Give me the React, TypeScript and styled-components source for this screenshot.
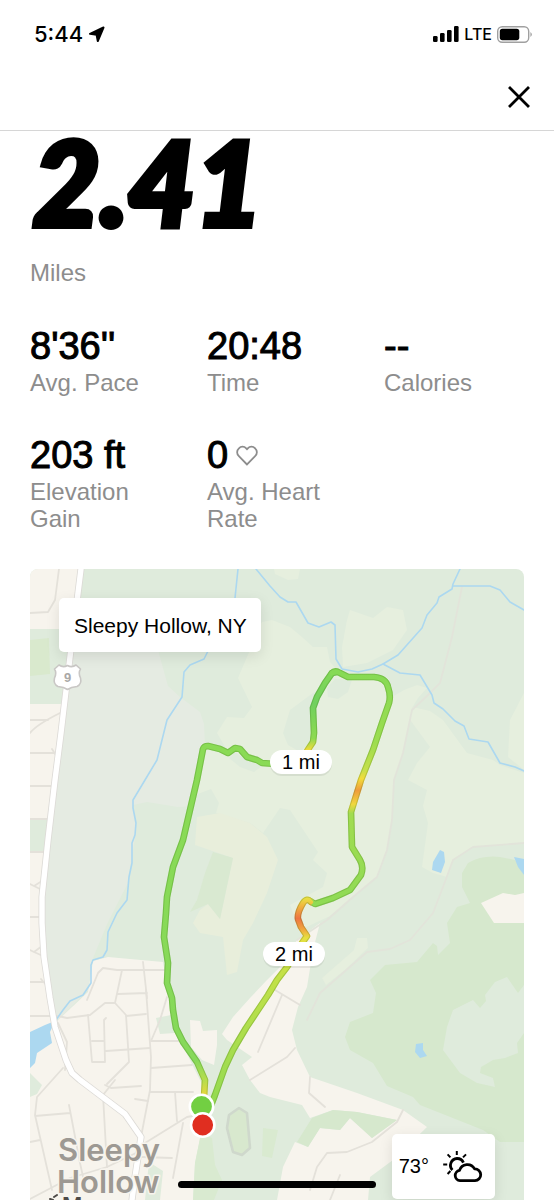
import React from "react";
import styled, { createGlobalStyle } from "styled-components";

const GlobalStyle = createGlobalStyle`
  *, *::before, *::after { box-sizing: border-box; }
  body {
    margin: 0;
    background: #fff;
    color: #000;
    font-family: "Liberation Sans", Arial, sans-serif;
  }
`;

const Page = styled.div`
  min-height: 100vh;
  overflow: hidden;
`;

const StatusBar = styled.div`
  display: flex;
  align-items: center;
  justify-content: space-between;
  height: 64px;
  padding: 4px 21px 0 34px;
  font-family: Inter, "Liberation Sans", sans-serif;
  font-weight: 500;
`;

const StatusGroup = styled.div`
  display: flex;
  align-items: center;
  gap: 5px;
`;

const Clock = styled.span`
  font-size: 22px;
  line-height: 24px;
`;

const Carrier = styled.span`
  font-size: 16px;
  line-height: 24px;
`;

const Header = styled.header`
  display: flex;
  align-items: center;
  justify-content: flex-end;
  height: 67px;
  padding: 0 19px;
  border-bottom: 1px solid #d6d6d6;
`;

const CloseButton = styled.button`
  display: grid;
  place-items: center;
  width: 32px;
  height: 32px;
  padding: 0;
  border: 0;
  background: none;
  color: #000;
  cursor: pointer;
`;

const Summary = styled.main`
  padding: 0 30px;
`;

const Distance = styled.h1`
  margin: 0;
  padding-left: 3px;
  font-family: Lato, sans-serif;
  font-size: 116px;
  line-height: 102px;
  font-weight: 900;
  font-style: italic;
  -webkit-text-stroke: 6px #000;
`;

const DistanceUnit = styled.p`
  margin: 26px 0 37px;
  font-size: 24px;
  line-height: 28px;
  color: #8d8d8d;
`;

const Stats = styled.dl`
  display: grid;
  grid-template-columns: repeat(3, 1fr);
  gap: 37px;
  margin: 0 0 37px;
`;

const Stat = styled.div`
  display: flex;
  flex-direction: column-reverse;
  justify-content: flex-end;
`;

const StatValue = styled.dd`
  display: flex;
  align-items: center;
  gap: 8px;
  margin: 0;
  font-size: 38px;
  line-height: 45px;
  -webkit-text-stroke: 1px #000;
`;

const StatLabel = styled.dt`
  font-size: 24px;
  line-height: 27px;
  color: #8d8d8d;
`;

const MapCard = styled.section`
  display: grid;
  overflow: hidden;
  border-radius: 8px 8px 0 0;

  & > * {
    grid-area: 1 / 1;
  }
`;

const MapCanvas = styled.svg`
  display: block;
  width: 100%;
  height: auto;
`;

const Place = styled.div`
  place-self: start;
  margin: 29px;
  padding: 14px 14px 12px 15px;
  border-radius: 5px;
  background: #fff;
  box-shadow: 0 4px 14px rgba(0, 0, 0, 0.1);
  font-size: 21px;
  line-height: 28px;
`;

const Weather = styled.div`
  display: flex;
  align-items: center;
  gap: 13px;
  place-self: end;
  height: 65px;
  margin: 0 29px 1px;
  padding: 0 11px 0 7px;
  border-radius: 5px;
  background: #fff;
  box-shadow: 0 4px 14px rgba(0, 0, 0, 0.1);
  font-size: 20px;
`;

const HomeIndicator = styled.div`
  position: fixed;
  bottom: 12px;
  left: 50%;
  width: 198px;
  height: 7px;
  border-radius: 4px;
  background: #000;
  transform: translateX(-50%);
`;

const FOREST = "#dfebdc";
const MEADOW = "#e6efde";
const FIELD = "#e8eedb";
const GROVE = "#d6e8cd";
const LAND = "#f7f4ed";
const WATER = "#acd8f0";

const meadows = [
  "M262 622 L272 620 L290 627 L302 637 L313 647 L327 647 L330 662 L337 670 L360 676 L388 678 L392 697 L404 690 L417 685 L427 688 L418 698 L412 708 L403 753 L394 780 L392 820 L387 850 L377 877 L353 897 L330 916 L300 930 L290 905 L323 887 L327 873 L313 860 L318 852 L290 810 L280 808 L263 833 L250 823 L216 813 L219 803 L211 789 L195 795 L205 745 L227 750 L217 733 L227 717 L244 718 L252 707 L238 678 L250 650 L258 628 Z",
  "M413 707 L430 711 L443 720 L467 753 L493 760 L500 765 L524 773 L524 843 L473 847 L453 860 L447 877 L433 873 L422 867 L428 823 L423 806 L427 790 L408 780 L417 763 L430 747 L408 717 Z",
  "M524 693 L510 720 L508 757 L524 770 Z",
  "M350 610 L373 618 L387 607 L403 610 L407 630 L393 650 L367 663 L343 667 L342 647 L347 620 Z",
  "M274 569 L275 574 L288 580 L298 579 L300 569 Z",
  "M357 938 L367 938 L368 948 L345 970 L326 985 L322 978 L354 950 Z",
];

const woods = [
  "M313 693 L290 710 L283 733 L288 745 L300 752 L312 740 L312 708 L322 690 Z",
  "M327 688 L335 679 L352 680 L348 692 L338 699 L328 697 Z",
  "M235 752 L246 760 L262 766 L254 772 L240 767 L229 758 Z",
];

const streets = [
  "M59 569 L55 600 L48 612 L30 613",
  "M30 720 L48 720 M30 733 Q36 725 60 713 M30 753 L56 753 M52 749 L57 757",
  "M30 786 L52 786 M30 819 L47 819 M30 852 L45 852 M30 884 L34 886 L42 881 M34 886 L42 890",
  "M30 917 L40 917 M30 950 L34 952 L42 946 M34 952 L43 956 M30 982 L46 982 M41 979 L47 986",
  "M30 1016 L58 1016 L67 1018 L90 1015 L105 1003 L115 1003 L126 1015 L129 1062 L107 1084",
  "M58 1023 L67 1042 L65 1070",
  "M88 1015 L92 1062 L105 1062 L104 1020 L106 1018 M92 1041 L104 1041 M106 1051 L150 1048 M126 1016 L146 1014",
  "M146 990 L151 1057 L150 1090 L141 1137",
  "M87 1000 L98 973 L103 968 L117 970 L165 970 M122 970 L115 1003 M143 962 L147 998 M118 994 L147 993",
  "M167 997 L160 1020 L151 1041 L181 1041 M151 1068 L192 1065 M150 1092 L193 1092",
  "M175 1092 L177 1121 M145 1143 L187 1117 L198 1115 M183 1123 L173 1178 M142 1157 L172 1158",
  "M63 1068 L37 1097 L35 1115 L52 1190 M35 1116 L70 1113 M69 1105 L80 1163 L86 1190 M30 1142 L40 1140",
  "M103 1095 L107 1167 M103 1095 L115 1080 M105 1085 L111 1088 L141 1086 M135 1099 L148 1101",
  "M30 1199 L70 1178 L107 1167 L138 1152",
  "M270 987 L300 1005 M282 995 L258 1052 M295 1048 L287 1057 L250 1080",
  "M310 1077 L309 1093 L325 1107 M403 1110 L397 1122 L372 1142 L347 1152 L327 1153 L317 1167 L310 1190 M340 1175 L330 1200",
];

const trails = [
  "M462 587 L452 637 L440 683 L427 696 L412 710 L403 753 L394 780 L392 820 L387 850 L377 877 L353 897 L327 920 L297 940",
  "M524 843 L473 847 L453 860 L443 887 L433 913 L410 940 L390 949 L367 952 L320 993 L307 1020",
];

const streams = [
  "M238 569 L235 598 L207 653 L204 659 L190 665 L184 672 L182 697 L167 720 L157 760 L145 780 L133 800 L133 808 L136 823 L135 835 L132 843 L132 863 L129 877 L127 900 L117 913 L108 932 L107 950 L103 957 L93 960 L91 965 L91 983 L83 995 L70 1001 L63 1010 L56 1020",
  "M256 569 L270 586 L280 597 L288 602 L296 602 L308 623 L319 627 L331 622 L335 625 L336 659 L342 669 L358 672 L372 669 L383 664 L398 655 L422 628 L427 615 L437 603 L439 597 L452 589 L453 584 L460 569",
  "M453 586 L490 586 L500 590 L510 602 L524 610",
  "M383 664 L400 673 L420 675 L432 695 L434 703 L443 709 L455 721 L464 726 L469 739 L488 742 L500 763 L515 767 L524 771",
];

const ponds = [
  "M440 850 L444 852 L445 862 L441 873 L432 870 L433 862 Z",
  "M514 857 L524 859 L524 875 L518 867 Z",
  "M416 1044 L423 1043 L423 1050 L427 1056 L420 1058 L415 1052 Z",
  "M30 1032 L45 1025 L55 1021 L50 1032 L52 1043 L37 1053 L35 1063 L30 1068 Z",
];

const HIGHWAY =
  "M81 569 L70 657 L61 733 L55 780 L48 840 L42 897 L42 923 L44 957 L50 998 L55 1027 L66 1060 L72 1073 L80 1080 L125 1114 L141 1137 L135 1177 L132 1200";

type Stop = [number, string];

interface RoutePart {
  id: string;
  from: number;
  to: number;
  stops: Stop[];
  d: string;
}

const route: RoutePart[] = [
  {
    id: "first",
    from: 747,
    to: 1095,
    stops: [[0, "#8adb55"], [0.9, "#86d95a"], [0.96, "#b9dd4c"], [1, "#e8d83e"]],
    d: "M204 1097 L205 1080 L197 1062 L183 1042 L176 1028 L173 1010 L172 998 L167 983 L168 963 L164 937 L166 913 L167 897 L173 867 L183 840 L197 780 L203 749 Q204 746 208 746 L220 749 L228 753 L235 748 L240 749 L247 757 L257 760 L262 763 L276 764",
  },
  {
    id: "second",
    from: 672,
    to: 750,
    stops: [[0, "#83d957"], [0.4, "#70d05e"], [0.85, "#8dda50"], [1, "#f0dc3c"]],
    d: "M304 756 L309 748 L313 742 L314 733 L313 708 L317 697 L325 683 L332 673 L337 672",
  },
  {
    id: "third",
    from: 672,
    to: 904,
    stops: [
      [0, "#86da55"],
      [0.3, "#9cdd50"],
      [0.42, "#c4e04a"],
      [0.46, "#f3dc3b"],
      [0.51, "#ef9c3c"],
      [0.57, "#f0d83d"],
      [0.61, "#a2dc50"],
      [1, "#8fdb55"],
    ],
    d: "M332 673 Q335 670 340 673 L348 677 L374 677 Q386 678 388 687 Q391 696 389 703 L382 723 L373 750 L361 780 L351 812 L352 847 L360 860 Q364 867 361 875 L350 890 L333 898 L315 904 L310 901",
  },
  {
    id: "fourth",
    from: 899,
    to: 1115,
    stops: [
      [0, "#e9dd42"],
      [0.03, "#f0b83f"],
      [0.09, "#ee7442"],
      [0.14, "#f0a53e"],
      [0.18, "#e6e040"],
      [0.35, "#c3e148"],
      [0.8, "#9fdc50"],
      [1, "#8fda52"],
    ],
    d: "M311 902 Q307 897 303 903 Q297 913 298 919 L301 927 L307 936 L302 943 L287 967 L277 980 L268 995 L258 1010 L246 1028 L233 1050 L225 1067 L215 1095 L208 1113",
  },
];

function MileMarker({ x, y, children }: { x: number; y: number; children: string }) {
  return (
    <g>
      <rect x={x - 31} y={y - 10} width="62" height="24" rx="12" fill="#000" opacity="0.07" />
      <rect x={x - 31} y={y - 12} width="62" height="24" rx="12" fill="#fff" />
      <text x={x} y={y + 7} fontSize="20" textAnchor="middle">
        {children}
      </text>
    </g>
  );
}

function RouteMap() {
  return (
    <MapCanvas
      viewBox="30 569 494 631"
      role="img"
      aria-label="Route map"
      fontFamily='"Liberation Sans", Arial, sans-serif'
      strokeLinejoin="round"
      strokeLinecap="round"
    >
      <defs>
        {route.map((part) => (
          <linearGradient
            key={part.id}
            id={`pace-${part.id}`}
            gradientUnits="userSpaceOnUse"
            x1="0"
            x2="0"
            y1={part.from}
            y2={part.to}
          >
            {part.stops.map(([offset, color]) => (
              <stop key={offset} offset={offset} stopColor={color} />
            ))}
          </linearGradient>
        ))}
      </defs>

      <rect x="30" y="569" width="494" height="631" fill={FOREST} />
      <path
        fill="#e5ebe2"
        d="M71 650 L158 650 L168 686 L180 697 L200 712 L204 724 L205 745 L195 806 L178 807 L147 802 L133 805 L136 832 L127 885 L108 922 L93 958 L88 990 L58 1020 L49 1000 L42 920 Z"
      />
      {meadows.map((d) => <path key={d} d={d} fill={MEADOW} />)}
      {woods.map((d) => <path key={d} d={d} fill={FOREST} />)}
      <path
        fill={FIELD}
        d="M197 817 L220 813 L250 823 L267 837 L278 860 L267 893 L253 923 L243 940 L237 972 L227 975 L223 937 L200 933 L193 923 L200 910 L208 904 L220 919 L233 858 L195 845 Z"
      />
      <path fill="#d9e9d1" d="M213 852 L233 858 L220 919 L208 904 L190 912 L197 900 L205 873 Z" />

      <path
        fill={GROVE}
        d="M468 863 Q482 855 500 857 L515 860 L524 875 L524 1142 L500 1142 L483 1130 L420 1105 L413 1097 L387 1086 L373 1063 L350 1050 L345 1037 L350 1022 L373 1013 L376 993 L370 980 L385 965 L417 962 L433 943 L437 946 L438 955 L450 943 L447 923 L457 907 L470 903 L462 887 L462 873 Z"
      />
      <path
        fill={FOREST}
        d="M524 985 L518 993 L507 977 L495 982 L485 995 L486 1001 L480 1008 L473 1000 L453 1010 L447 1027 L443 1050 L460 1073 L477 1083 L495 1087 L493 1078 L480 1073 L481 1067 L493 1060 L505 1058 L518 1053 L517 1043 L524 1033 Z"
      />
      <path fill={LAND} d="M481 903 L503 893 L515 895 L524 893 L524 923 L494 923 Z" />

      <path fill={LAND} d="M30 569 L81 569 L73 629 L30 629 Z" />
      <path fill="#d9e9cd" d="M30 640 L49 638 L50 674 L30 676 Z" />
      <path fill={LAND} d="M30 704 L64 704 L49 820 L30 820 Z M30 851 L48 851 L42 897 L42 923 L50 998 L56 1022 L88 992 L93 961 L108 957 L163 962 L167 983 L173 1025 L190 1060 L205 1090 L203 1125 L195 1163 L193 1200 L30 1200 Z" />
      <path fill={FOREST} d="M156 1018 L171 1015 L175 1033 L160 1034 Z M30 1073 L42 1085 L37 1094 L30 1097 Z M149 1162 L163 1171 L160 1200 L145 1200 Z" />
      <path fill={LAND} d="M190 1020 L200 1021 L203 1031 L217 1030 L217 1045 L214 1065 L202 1060 L191 1047 Z" />
      <path
        fill={LAND}
        d="M233 1017 L250 998 L267 980 L280 967 L297 940 L320 923 L313 950 L307 987 L298 1007 L292 1030 L297 1050 L310 1077 L357 1093 L403 1110 L427 1127 L393 1160 L370 1177 L368 1200 L277 1200 L283 1167 L295 1142 L308 1147 L320 1128 L340 1130 L350 1118 L372 1138 L397 1120 L357 1112 L333 1110 L310 1118 L302 1105 L270 1097 L260 1093 L250 1080 L242 1065 L252 1057 L227 1040 L222 1034 Z"
      />
      <path
        fill={GROVE}
        d="M297 1142 L312 1118 L333 1110 L357 1112 L397 1120 L372 1138 L350 1118 L340 1130 L320 1128 L308 1147 Z"
      />
      <path fill="#d9ead0" d="M201 1133 L212 1138 L215 1165 L222 1180 L214 1200 L193 1200 L195 1163 Z M263 1128 L278 1130 L272 1158 L262 1156 Z" />
      <path
        fill="#d8e8ce"
        stroke="#cfd8cc"
        strokeWidth="2.6"
        d="M229 1115 L239 1108 L247 1113 L250 1148 L242 1155 L233 1152 L227 1128 Z"
      />

      <g fill="none" stroke="#e2e4da" strokeWidth="1.8">
        {trails.map((d) => <path key={d} d={d} />)}
      </g>
      <g fill="none" stroke="#e4e1da" strokeWidth="1.8">
        {streets.map((d) => <path key={d} d={d} />)}
      </g>
      <g fill="none" stroke={WATER} strokeWidth="1.6">
        {streams.map((d) => <path key={d} d={d} />)}
      </g>
      {ponds.map((d) => <path key={d} d={d} fill={WATER} />)}
      <path d={HIGHWAY} fill="none" stroke="#dcdad6" strokeWidth="7" />
      <path d={HIGHWAY} fill="none" stroke="#fff" strokeWidth="5.4" />

      <path
        fill="#fff"
        stroke="#c9c7c5"
        strokeWidth="1.6"
        d="M59 665 Q63 668 67.500 665.500 Q72 668 76 665 L80.500 669 Q78 673 80.500 678 Q82 684 77 686.500 Q71 687 67.500 689.500 Q64 687 58 686.500 Q53 684 54.500 678 Q57 673 54.500 669 Z"
      />
      <text x="67.500" y="682" fontSize="13" fontWeight="700" textAnchor="middle" fill="#aaa8a6">
        9
      </text>

      <g
        fontFamily="Inter, sans-serif"
        fontSize="31"
        fontWeight="600"
        fill="#9d9993"
        stroke="#f7f4ed"
        strokeWidth="3"
        paintOrder="stroke"
      >
        <text x="58" y="1161">Sleepy</text>
        <text x="57" y="1193">Hollow</text>
      </g>
      <text x="62" y="1213" fontFamily="Inter, sans-serif" fontSize="22" fontWeight="600" fill="#4d4a47">
        M
      </text>
      <path d="M50 1199 L53 1200 M54 1197 L57 1195" stroke="#4d4a47" strokeWidth="2" />

      <g fill="none">
        {route.map((part) => (
          <g key={part.id} stroke={`url(#pace-${part.id})`}>
            <path d={part.d} strokeWidth="6.6" />
            <path d={part.d} strokeWidth="6.6" stroke="#2f5a10" strokeOpacity="0.2" />
          </g>
        ))}
        {route.map((part) => (
          <path key={part.id} d={part.d} strokeWidth="4.4" stroke={`url(#pace-${part.id})`} />
        ))}
      </g>

      <circle cx="201.500" cy="1106.500" r="11.700" fill="#72cf42" stroke="#fff" strokeWidth="2.600" />
      <circle cx="202.700" cy="1125" r="11.700" fill="#e02e20" stroke="#fff" strokeWidth="2.600" />

      <MileMarker x={301} y={762}>1 mi</MileMarker>
      <MileMarker x={294} y={954}>2 mi</MileMarker>
    </MapCanvas>
  );
}

function LocationIcon() {
  return (
    <svg width="17" height="17" viewBox="0 0 17 17" aria-hidden="true">
      <path
        d="M15.500 1.500 L9.800 15 L8.600 8.700 L2 7.800 Z"
        fill="#000"
        stroke="#000"
        strokeWidth="2"
        strokeLinejoin="round"
      />
    </svg>
  );
}

function SignalIcon() {
  return (
    <svg width="26" height="16" viewBox="0 0 26 16" aria-hidden="true">
      <rect x="0" y="10" width="4.600" height="6" rx="1.300" />
      <rect x="7" y="7" width="4.600" height="9" rx="1.300" />
      <rect x="14" y="4" width="4.600" height="12" rx="1.300" />
      <rect x="21" y="0" width="4.600" height="16" rx="1.300" />
    </svg>
  );
}

function BatteryIcon() {
  return (
    <svg width="36" height="17" viewBox="0 0 36 17" aria-hidden="true">
      <rect x="0.700" y="0.700" width="31" height="15.600" rx="4.500" fill="none" stroke="#a0a0a0" strokeWidth="1.400" />
      <rect x="2.800" y="2.800" width="19.500" height="11.400" rx="2.600" />
      <path d="M33.500 6 Q36 8.500 33.500 11 Z" fill="#8f8f8f" />
    </svg>
  );
}

function CloseIcon() {
  return (
    <svg width="22" height="22" viewBox="0 0 22 22" aria-hidden="true">
      <path d="M2 2 L20 20 M20 2 L2 20" stroke="#000" strokeWidth="2.800" strokeLinecap="square" />
    </svg>
  );
}

function HeartIcon() {
  return (
    <svg width="22" height="21" viewBox="0 0 22 21" role="img" aria-label="Heart rate">
      <path
        d="M11 19.500 L2.900 11.200 A5.300 5.300 0 0 1 2.900 3.300 A5 5 0 0 1 10.200 3.300 L11 4.200 L11.800 3.300 A5 5 0 0 1 19.100 3.300 A5.300 5.300 0 0 1 19.100 11.200 Z"
        fill="none"
        stroke="#8d8d8d"
        strokeWidth="1.800"
        strokeLinejoin="miter"
      />
    </svg>
  );
}

function WeatherIcon() {
  return (
    <svg
      width="42"
      height="34"
      viewBox="0 0 42 34"
      role="img"
      aria-label="Partly cloudy"
      fill="none"
      stroke="#000"
      strokeWidth="2.800"
      strokeLinejoin="round"
    >
      <path d="M10.400 20 A6.800 6.800 0 0 1 15 8.500 A6.800 6.800 0 0 1 21.400 12.600" />
      <path strokeWidth="2" d="M14.800 1 V5 M5.600 4.400 L8.400 7.400 M24 4.400 L21 7.400 M1.200 14.500 H5.200 M5.600 24 L8.400 21" />
      <path d="M18 30.700 A5.200 5.200 0 0 1 17.500 20.400 A8.200 8.200 0 0 1 32.600 18.900 A5.900 5.900 0 0 1 33 30.700 Z" />
    </svg>
  );
}

const stats: { label: string; value: string; icon?: React.ReactNode }[] = [
  { label: "Avg. Pace", value: "8'36''" },
  { label: "Time", value: "20:48" },
  { label: "Calories", value: "--" },
  { label: "Elevation Gain", value: "203 ft" },
  { label: "Avg. Heart Rate", value: "0", icon: <HeartIcon /> },
];

export default function App() {
  return (
    <>
      <GlobalStyle />
      <Page>
        <StatusBar>
          <StatusGroup>
            <Clock>5:44</Clock>
            <LocationIcon />
          </StatusGroup>
          <StatusGroup>
            <SignalIcon />
            <Carrier>LTE</Carrier>
            <BatteryIcon />
          </StatusGroup>
        </StatusBar>
        <Header>
          <CloseButton type="button" aria-label="Close">
            <CloseIcon />
          </CloseButton>
        </Header>
        <Summary>
          <Distance>2.41</Distance>
          <DistanceUnit>Miles</DistanceUnit>
          <Stats>
            {stats.map(({ label, value, icon }) => (
              <Stat key={label}>
                <StatLabel>{label}</StatLabel>
                <StatValue>
                  {value}
                  {icon}
                </StatValue>
              </Stat>
            ))}
          </Stats>
          <MapCard>
            <RouteMap />
            <Place>Sleepy Hollow, NY</Place>
            <Weather>
              <span>73°</span>
              <WeatherIcon />
            </Weather>
          </MapCard>
        </Summary>
        <HomeIndicator />
      </Page>
    </>
  );
}
